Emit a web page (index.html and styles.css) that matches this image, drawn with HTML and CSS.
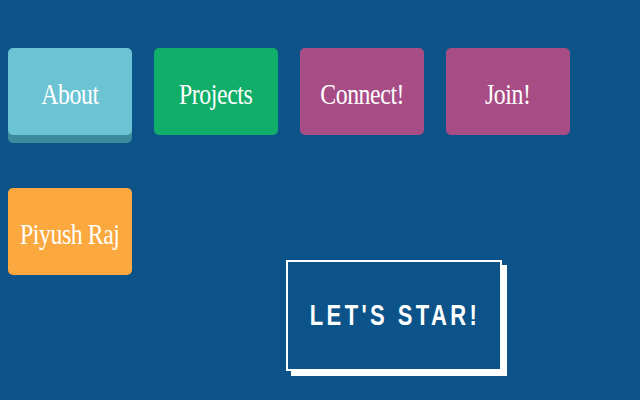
FILE: index.html
```html
<!DOCTYPE html>
<html lang="en">
<head>
    <meta charset="UTF-8">
    <meta name="viewport" content="width=device-width, initial-scale=1.0">
    <title>Piyush Raj</title>
    <link rel="stylesheet" href="styles.css">
</head>
<body>
    <div class="page">
        <nav class="menu">
            <a class="btn btn-about" href="#"><span>About</span></a>
            <a class="btn btn-projects" href="#"><span>Projects</span></a>
            <a class="btn btn-connect" href="#"><span>Connect!</span></a>
            <a class="btn btn-join" href="#"><span>Join!</span></a>
        </nav>
        <div class="menu second">
            <a class="btn btn-name" href="#"><span>Piyush Raj</span></a>
        </div>
        <div class="start">
            <a class="star" href="#"><span>LET'S STAR!</span></a>
        </div>
    </div>
</body>
</html>
```

FILE: styles.css
```css
html, body{
    margin: 0;
    height: 100%;
}
body{
    background: #0b5389;
    overflow: hidden;
}
.page{
    padding: 48px 8px 0;
}
.menu{
    display: flex;
    gap: 22px;
}
.menu.second{
    margin-top: 53px;
}
.btn{
    display: flex;
    align-items: center;
    justify-content: center;
    box-sizing: border-box;
    width: 124px;
    height: 87px;
    padding-top: 6px;
    border-radius: 5px;
    color: #fff;
    text-decoration: none;
    font: 29px "Liberation Serif", serif;
}
/* narrow, tall lettering */
.btn span{
    display: inline-block;
    transform: scaleX(0.82);
    white-space: nowrap;
    letter-spacing: -0.5px;
}
.btn-about{
    background: #6cc3d3;
    box-shadow: 0 8px 0 #3b8b9c;
}
.btn-projects{ background: #10ae69; }
.btn-connect,
.btn-join{ background: #a84c85; }
.btn-name{ background: #fba83e; }

.start{
    display: flex;
    padding-left: 278px;
    margin-top: -15px;
}
.star{
    display: flex;
    align-items: center;
    justify-content: center;
    width: 212px;
    height: 107px;
    border: 2px solid #fff;
    box-shadow: 5px 5px 0 #fff;
    color: #fff;
    text-decoration: none;
    font: bold 22px "Liberation Sans", sans-serif;
    letter-spacing: 3.4px;
}
.star span{
    display: inline-block;
    transform: scaleY(1.3);
    margin-left: 2px;
}
```
